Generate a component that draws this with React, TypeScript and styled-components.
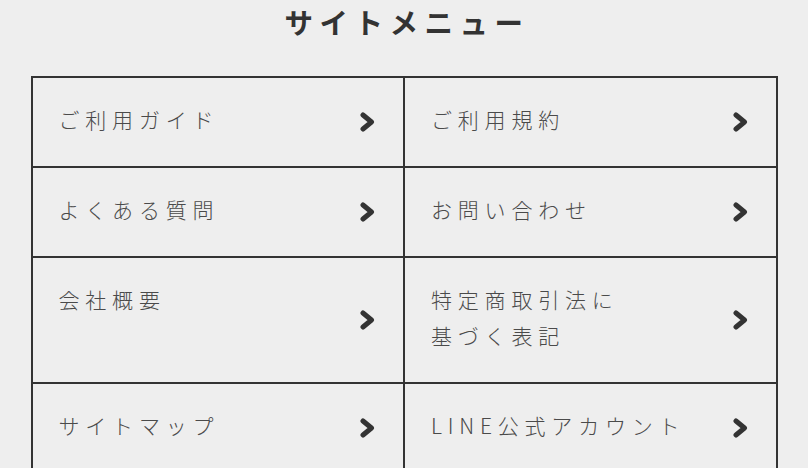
import styled, { createGlobalStyle } from "styled-components";

const GlobalStyle = createGlobalStyle`
    body {
        margin: 0;
        background-color: #eeeeee;
        font-family: "Noto Sans CJK JP", "Noto Sans", sans-serif;
    }
`;

type MenuItem = {
    label: string[];
};

const items: MenuItem[] = [
    { label: ["ご利用ガイド"] },
    { label: ["ご利用規約"] },
    { label: ["よくある質問"] },
    { label: ["お問い合わせ"] },
    { label: ["会社概要"] },
    { label: ["特定商取引法に", "基づく表記"] },
    { label: ["サイトマップ"] },
    { label: ["LINE公式アカウント"] },
];

const Chevron = () => (
    <svg width="16" height="22" viewBox="0 0 16 22" aria-hidden="true">
        <polyline
            points="4,4 12.5,11 4,18"
            fill="none"
            stroke="#333333"
            strokeWidth="5"
            strokeLinecap="round"
            strokeLinejoin="round"
        />
    </svg>
);

const App = () => {
    return (
        <>
            <GlobalStyle />
            <StyledSection>
                <h2>サイトメニュー</h2>
                <StyledGrid>
                    {items.map((item) => (
                        <StyledCell key={item.label.join("")} href="#">
                            <span className={"label"}>
                                {item.label.map((line) => (
                                    <span key={line}>{line}</span>
                                ))}
                            </span>
                            <Chevron />
                        </StyledCell>
                    ))}
                </StyledGrid>
            </StyledSection>
        </>
    );
};

const StyledSection = styled.section`
    h2 {
        margin: 1px 0 33px;
        text-align: center;
        font-size: 28.5px;
        line-height: 42px;
        font-weight: 700;
        letter-spacing: 6.5px;
        padding-left: 6px;
        color: #333333;
    }
`;

const StyledGrid = styled.div`
    display: grid;
    grid-template-columns: 1fr 1fr;
    width: 747px;
    margin: 0 auto;
    border-top: 2px solid #333333;
    border-left: 2px solid #333333;
    box-sizing: border-box;
`;

const StyledCell = styled.a`
    display: flex;
    justify-content: space-between;
    align-items: center;
    padding: 0 28px 0 26px;
    border-right: 2px solid #333333;
    border-bottom: 2px solid #333333;
    text-decoration: none;

    .label {
        display: flex;
        flex-direction: column;
        align-self: flex-start;
        padding: 23px 0 29px;
        font-size: 21px;
        line-height: 36px;
        font-weight: 300;
        letter-spacing: 5.8px;
        color: #4a4a4a;
    }

    svg {
        flex-shrink: 0;
    }
`;

export default App;
